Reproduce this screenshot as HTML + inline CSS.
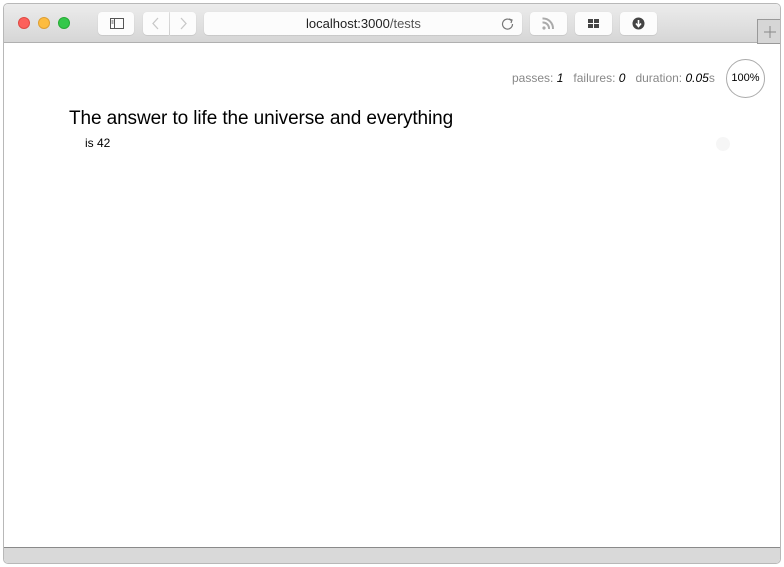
<!DOCTYPE html>
<html><head><style>
*{margin:0;padding:0;box-sizing:border-box}
body{width:784px;height:567px;background:#fff;position:relative;overflow:hidden;font-family:"Liberation Sans",Arial,sans-serif}
.win{position:absolute;left:3px;top:3px;width:778px;height:561px;border:1px solid #b8b8b8;border-radius:5px;overflow:hidden;background:#fff}
.tb{position:absolute;left:0;top:0;width:100%;height:39px;background:linear-gradient(#ececec,#d6d6d6);border-bottom:1px solid #b0b0b0}
.dot{position:absolute;top:13px;width:12px;height:12px;border-radius:50%}
.btn{position:absolute;top:8px;height:23px;background:#fcfcfc;border-radius:4px;box-shadow:0 0.5px 1px rgba(0,0,0,.15)}
.sb{position:absolute;left:0;bottom:0;width:100%;height:16px;background:#d9d9d9;border-top:1px solid #8a8a8a}
.abs{position:absolute}
</style></head><body>
<div class="win">
<div class="tb">
<div class="dot" style="left:14px;background:#fc605b;border:1px solid #de4a44"></div>
<div class="dot" style="left:34px;background:#fdbc40;border:1px solid #de9f34"></div>
<div class="dot" style="left:54px;background:#34c84a;border:1px solid #27aa35"></div>
<div class="btn" style="left:94px;width:36px"><svg width="36" height="23"><rect x="12.5" y="6.5" width="13" height="10" fill="none" stroke="#555"/><line x1="16.5" y1="6.5" x2="16.5" y2="16.5" stroke="#555"/><line x1="13.5" y1="9" x2="15.5" y2="9" stroke="#555"/><line x1="13.5" y1="11" x2="15.5" y2="11" stroke="#555"/></svg></div>
<div class="btn" style="left:139px;width:26px;border-radius:4px 0 0 4px"><svg width="26" height="23"><path d="M15 6 L10 11.5 L15 17" fill="none" stroke="#c8c8c8" stroke-width="1.3"/></svg></div>
<div class="btn" style="left:166px;width:26px;border-radius:0 4px 4px 0"><svg width="26" height="23"><path d="M11 6 L16 11.5 L11 17" fill="none" stroke="#c8c8c8" stroke-width="1.3"/></svg></div>
<div class="btn" style="left:200px;width:318px"><span class="abs" style="left:102px;top:4px;font-size:13px;color:#222">localhost:3000<span style="color:#555">/tests</span></span><svg class="abs" style="left:296px;top:4px" width="16" height="16"><path d="M11 4.5 A5 5 0 1 0 12.5 8" fill="none" stroke="#777" stroke-width="1.2"/><path d="M9 3 L12 4 L11 7" fill="none" stroke="#777" stroke-width="1.2"/></svg></div>
<div class="btn" style="left:526px;width:37px"><svg width="37" height="23"><circle cx="14" cy="16" r="1.6" fill="#aaa"/><path d="M12.5 10.5 A6 6 0 0 1 19 17" fill="none" stroke="#aaa" stroke-width="2"/><path d="M12.5 6.5 A10 10 0 0 1 23 17" fill="none" stroke="#aaa" stroke-width="2"/></svg></div>
<div class="btn" style="left:571px;width:37px"><svg width="37" height="23"><rect x="13" y="7" width="5" height="4" fill="#444"/><rect x="19" y="7" width="5" height="4" fill="#444"/><rect x="13" y="12" width="5" height="4" fill="#444"/><rect x="19" y="12" width="5" height="4" fill="#444"/></svg></div>
<div class="btn" style="left:616px;width:37px"><svg width="37" height="23"><circle cx="18.5" cy="11.5" r="6" fill="#444"/><path d="M18.5 8 V14 M16 11.5 L18.5 14.5 L21 11.5" fill="none" stroke="#fff" stroke-width="1.6"/></svg></div>
<div class="abs" style="left:753px;top:15px;width:25px;height:25px;border:1px solid #999;background:#d6d6d6"><svg width="24" height="24"><path d="M12 6 V18 M6 12 H18" stroke="#888" stroke-width="1"/></svg></div>
</div>
<div class="abs" style="left:508px;top:67px;font-size:12px;color:#888;white-space:nowrap">passes: <i style="color:#000">1</i>&nbsp;&nbsp;&nbsp;failures: <i style="color:#000">0</i>&nbsp;&nbsp;&nbsp;duration: <i style="color:#000">0.05</i>s</div>
<div class="abs" style="left:722px;top:55px;width:39px;height:39px;border:1px solid #aaa;border-radius:50%;font-size:11px;text-align:center;line-height:37px;color:#000">100%</div>
<div class="abs" style="left:65px;top:104px;font-size:19px;color:#000;white-space:nowrap;letter-spacing:-0.1px">The answer to life the universe and everything</div>
<div class="abs" style="left:81px;top:132px;font-size:12px;color:#000">is 42</div>
<div class="abs" style="left:712px;top:133px;width:14px;height:14px;border-radius:50%;background:#f6f6f6"></div>
<div class="sb"></div>
</div>
</body></html>
